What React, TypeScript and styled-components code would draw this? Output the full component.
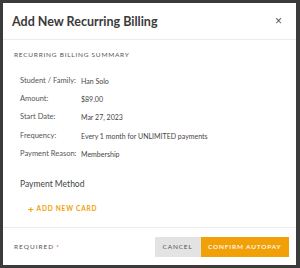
import React from 'react';
import styled, { createGlobalStyle } from 'styled-components';

const GlobalStyle = createGlobalStyle`
  html, body {
    margin: 0;
    padding: 0;
    background: #3b3b3b;
  }
  body {
    font-family: Lato, "Open Sans", Arial, sans-serif;
  }
`;

const Backdrop = styled.div`
  width: 300px;
  height: 268px;
  padding: 3px 4px 3px 3px;
  box-sizing: border-box;
`;

const Modal = styled.div`
  width: 293px;
  height: 262px;
  background: #fff;
  display: flex;
  flex-direction: column;
`;

const Header = styled.div`
  height: 36px;
  display: flex;
  align-items: center;
  justify-content: space-between;
  padding: 0 14px 0 9px;
  border-bottom: 1px solid #ececec;
  flex-shrink: 0;
`;

const Title = styled.h1`
  margin: 0;
  font-size: 12.5px;
  font-weight: 700;
  color: #3a3a3a;
`;

const CloseButton = styled.button`
  background: none;
  border: none;
  padding: 0;
  color: #555;
  font-size: 12px;
  line-height: 1;
  cursor: pointer;
`;

const Body = styled.div`
  flex: 1;
  padding: 11px 11px 0 11px;
`;

const SectionLabel = styled.div`
  font-size: 6.5px;
  letter-spacing: 0.75px;
  color: #555;
  text-transform: uppercase;
  margin-bottom: 14px;
`;

const SummaryGrid = styled.dl`
  display: grid;
  grid-template-columns: 61px 1fr;
  margin: 0;
  padding-left: 6px;
`;

const Term = styled.dt`
  font-size: 7.5px;
  color: #555;
  height: 18.2px;
  line-height: 18px;
`;

const Value = styled.dd`
  margin: 0;
  font-size: 7px;
  color: #444;
  height: 18.2px;
  line-height: 18px;
`;

const PaymentHeading = styled.div`
  font-size: 8.5px;
  color: #444;
  padding-left: 6px;
  margin-top: 16px;
`;

const AddCard = styled.button`
  background: none;
  border: none;
  padding: 0;
  margin: 15px 0 0 14px;
  color: #f2a007;
  font-family: inherit;
  font-size: 6.5px;
  font-weight: 700;
  letter-spacing: 0.8px;
  display: flex;
  align-items: center;
  gap: 2px;
  cursor: pointer;
`;

const Plus = styled.span`
  font-size: 10px;
  font-weight: 700;
  line-height: 1;
`;

const Footer = styled.div`
  height: 37px;
  border-top: 1px solid #ececec;
  display: flex;
  align-items: center;
  justify-content: space-between;
  padding: 0 7px 0 11px;
  flex-shrink: 0;
`;

const Required = styled.div`
  font-size: 6.5px;
  letter-spacing: 1px;
  color: #555;
`;

const Star = styled.span`
  color: #e53935;
  margin-left: 2px;
`;

const Actions = styled.div`
  display: flex;
`;

const Button = styled.button<{ $primary?: boolean }>`
  height: 20px;
  border: none;
  padding: 0 ${(p) => (p.$primary ? '7.5px' : '8px')};
  font-family: inherit;
  font-size: 6.5px;
  font-weight: ${(p) => (p.$primary ? 600 : 400)};
  letter-spacing: 0.8px;
  background: ${(p) => (p.$primary ? '#f2a007' : '#e3e3e3')};
  color: ${(p) => (p.$primary ? '#fff' : '#555')};
  cursor: pointer;
`;

const rows: [string, string][] = [
  ['Student / Family:', 'Han Solo'],
  ['Amount:', '$89.00'],
  ['Start Date:', 'Mar 27, 2023'],
  ['Frequency:', 'Every 1 month for UNLIMITED payments'],
  ['Payment Reason:', 'Membership'],
];

export default function App() {
  return (
    <>
      <GlobalStyle />
      <Backdrop>
        <Modal>
          <Header>
            <Title>Add New Recurring Billing</Title>
            <CloseButton aria-label="Close">×</CloseButton>
          </Header>
          <Body>
            <SectionLabel>Recurring Billing Summary</SectionLabel>
            <SummaryGrid>
              {rows.map(([k, v]) => (
                <React.Fragment key={k}>
                  <Term>{k}</Term>
                  <Value>{v}</Value>
                </React.Fragment>
              ))}
            </SummaryGrid>
            <PaymentHeading>Payment Method</PaymentHeading>
            <AddCard>
              <Plus>+</Plus>
              ADD NEW CARD
            </AddCard>
          </Body>
          <Footer>
            <Required>
              REQUIRED<Star>*</Star>
            </Required>
            <Actions>
              <Button>CANCEL</Button>
              <Button $primary>CONFIRM AUTOPAY</Button>
            </Actions>
          </Footer>
        </Modal>
      </Backdrop>
    </>
  );
}
